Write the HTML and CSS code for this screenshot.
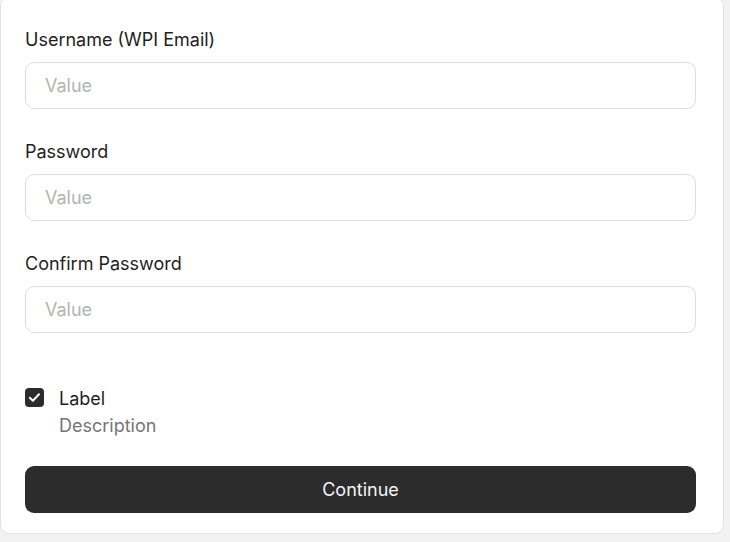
FILE: index.html
```html
<!DOCTYPE html>
<html>
<head>
<meta charset="utf-8">
<link rel="stylesheet" href="styles.css">
</head>
<body>
<form class="card">
  <div class="field">
    <label class="label">Username (WPI Email)</label>
    <div class="input">Value</div>
  </div>
  <div class="field">
    <label class="label">Password</label>
    <div class="input">Value</div>
  </div>
  <div class="field">
    <label class="label">Confirm Password</label>
    <div class="input">Value</div>
  </div>
  <div class="check">
    <span class="box">
      <svg width="19" height="19" viewBox="0 0 19 19"><path d="M4.8 9.8 L7.9 12.8 L14 6.2" fill="none" stroke="#fff" stroke-width="2" stroke-linecap="round" stroke-linejoin="round"/></svg>
    </span>
    <div class="check-text">
      <div class="check-label">Label</div>
      <div class="check-desc">Description</div>
    </div>
  </div>
  <div class="button">Continue</div>
</form>
</body>
</html>
```
FILE: styles.css
```css
html, body {
  margin: 0;
  padding: 0;
  background: #f2f2f2;
  font-family: Inter, "Noto Sans", sans-serif;
}
.card {
  box-sizing: border-box;
  width: 724px;
  margin: -3px 0 0 0;
  background: #fff;
  border: 1px solid #e2e2e2;
  border-radius: 9px;
  padding: 31px 27px 20px 24px;
  display: flex;
  flex-direction: column;
}
.field {
  display: flex;
  flex-direction: column;
  gap: 11px;
  margin-bottom: 32px;
}
.label {
  font-size: 18px;
  line-height: 22px;
  color: #1e1e1e;
}
.input {
  box-sizing: border-box;
  height: 47px;
  border: 1px solid #dedede;
  border-radius: 9px;
  padding: 0 19px;
  display: flex;
  align-items: center;
  font-size: 18px;
  color: #b3b3b3;
}
.check {
  display: flex;
  gap: 15px;
  margin-top: 23px;
}
.box {
  width: 19px;
  height: 19px;
  border-radius: 4px;
  background: #2c2c2c;
  display: flex;
  flex: none;
}
.check-text {
  display: flex;
  flex-direction: column;
  gap: 5px;
}
.check-label {
  font-size: 18px;
  line-height: 22px;
  color: #1e1e1e;
}
.check-desc {
  font-size: 18px;
  line-height: 22px;
  color: #757575;
}
.button {
  margin-top: 29px;
  height: 47px;
  border-radius: 9px;
  background: #2c2c2c;
  color: #f5f5f5;
  display: flex;
  align-items: center;
  justify-content: center;
  font-size: 18px;
}
```
